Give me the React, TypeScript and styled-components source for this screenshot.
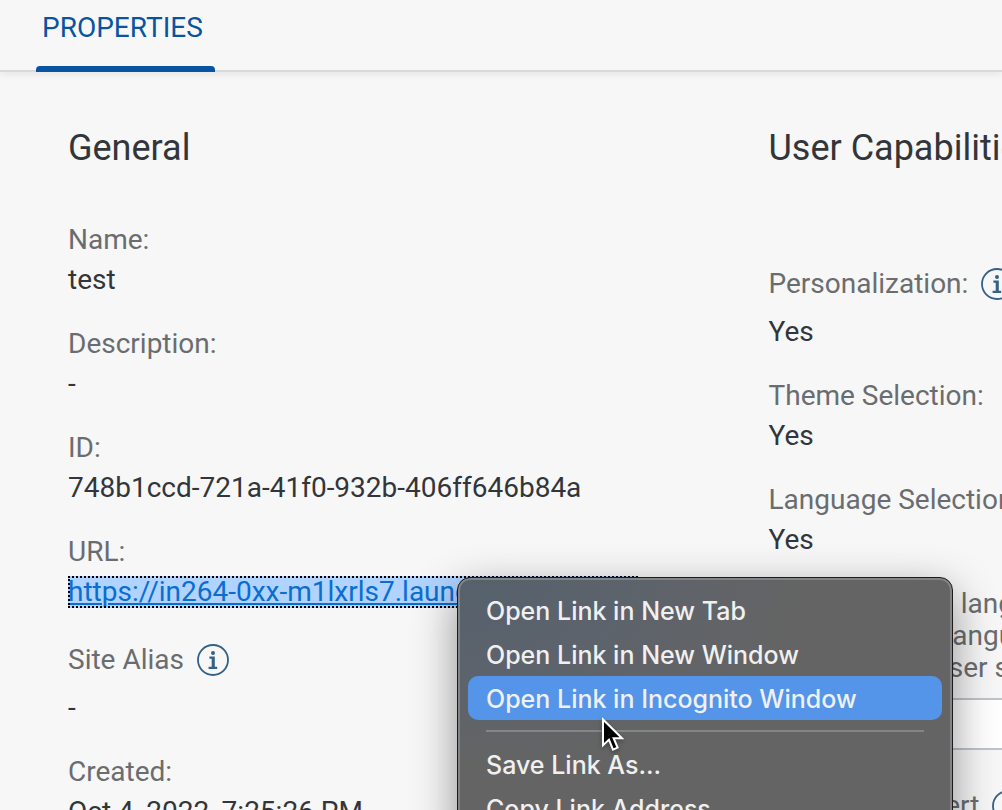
import React from 'react';
import styled, { createGlobalStyle } from 'styled-components';

const GlobalStyle = createGlobalStyle`
  *, *::before, *::after { box-sizing: border-box; }
  body {
    margin: 0;
    background: #f7f7f7;
    color: #32363a;
    font-family: Roboto, "Liberation Sans", sans-serif;
    font-size: 28px;
    font-weight: 430;
    line-height: 32px;
  }
`;

const Page = styled.div`
  position: relative;
  height: 100vh;
  overflow: hidden;
`;

const TabBar = styled.nav`
  height: 72px;
  padding: 0 36px;
  display: flex;
  align-items: stretch;
  border-bottom: 2px solid #d9d9d9;
  box-shadow: 0 2px 8px rgba(0, 0, 0, 0.08);
`;

const Tab = styled.button`
  display: flex;
  flex-direction: column;
  justify-content: space-between;
  margin-bottom: -2px;
  padding: 12px 0 0;
  border: 0;
  background: none;
  color: #0854a0;
  font: inherit;
`;

const TabText = styled.span`
  min-width: 179px;
  padding: 0 6px;
  text-align: left;
`;

const TabMarker = styled.span`
  align-self: stretch;
  height: 6px;
  border-radius: 4px 4px 0 0;
  background: #0854a0;
`;

const Columns = styled.main`
  display: grid;
  grid-template-columns: minmax(0, 3fr) minmax(0, 1fr);
  padding: 58px 0 0 68px;
`;

const Title = styled.h2`
  margin: 0 0 58px;
  font-size: 36px;
  font-weight: 450;
  line-height: 36px;
  white-space: nowrap;
`;

const Fields = styled.dl<{ $offset?: boolean }>`
  display: flex;
  flex-direction: column;
  gap: 32px;
  margin: 0;
  padding-top: ${(p) => (p.$offset ? 40 : 0)}px;
  white-space: nowrap;
`;

const Field = styled.div<{ $tall?: boolean }>`
  display: flex;
  flex-direction: column;
  gap: ${(p) => (p.$tall ? 12 : 8)}px;
`;

const Label = styled.dt<{ $tall?: boolean }>`
  display: flex;
  align-items: center;
  gap: 13px;
  height: ${(p) => (p.$tall ? 40 : 32)}px;
  color: #6a6d70;
`;

const Value = styled.dd`
  margin: 0;
`;

const SiteLink = styled.a`
  display: block;
  width: 570px;
  height: 32px;
  overflow: hidden;
  background: #b0d3ff;
  color: #0a6ed1;
  outline: 2px dotted #000;
  outline-offset: -2px;
  text-decoration: underline;
  text-decoration-thickness: 2px;
  text-underline-offset: 2px;
`;

const Hint = styled.div`
  color: #6a6d70;
`;

const HintLine = styled.div``;

const TextBox = styled.input`
  display: block;
  width: 100%;
  height: 52px;
  margin: 14px 0 4px;
  padding: 0 16px;
  border: 2px solid #bfc4c9;
  border-right: 0;
  background: #fff;
  color: #32363a;
  font: inherit;
`;

const InfoButton = styled.button`
  display: flex;
  flex: none;
  padding: 0;
  border: 0;
  background: none;
  color: #346187;
`;

const Menu = styled.div`
  position: absolute;
  top: 577px;
  left: 457px;
  width: 496px;
  padding: 10px;
  border: 1px solid #1c1c1e;
  border-radius: 13px;
  background: radial-gradient(ellipse 340px 190px at 0 0, #55616c 0%, #5d636c 50%, #646464 100%);
  box-shadow: inset 0 0 0 2px #828486, 0 14px 44px rgba(0, 0, 0, 0.42);
  color: #f0f0f0;
  font-family: Inter, "Liberation Sans", sans-serif;
  font-size: 25px;
  font-weight: 500;
`;

const MenuItem = styled.button<{ $active?: boolean }>`
  display: block;
  width: 100%;
  height: 44px;
  padding: 2px 18px 0;
  border: 0;
  border-radius: 10px;
  background: ${(p) => (p.$active ? '#5495e9' : 'none')};
  color: inherit;
  font: inherit;
  text-align: left;
`;

const Separator = styled.hr`
  height: 2px;
  margin: 10px 18px;
  border: 0;
  background: #858585;
`;

const Pointer = styled.svg`
  position: absolute;
  top: 138px;
  left: 143px;
  filter: drop-shadow(0 2px 2px rgba(0, 0, 0, 0.35));
`;

function Info({ about }: { about: string }) {
  return (
    <InfoButton type="button" aria-label={`About ${about}`}>
      <svg width="32" height="32" viewBox="0 0 32 32" aria-hidden="true">
        <circle cx="16" cy="16" r="15" fill="none" stroke="currentColor" strokeWidth="1.8" />
        <circle cx="16" cy="9" r="2" fill="currentColor" />
        <path d="M12.4 12.6H17.8V22.8H20.2V25H11.6V22.8H14.7V14.8H12.4Z" fill="currentColor" />
      </svg>
    </InfoButton>
  );
}

interface FieldRowProps {
  label: string;
  info?: boolean;
  children?: React.ReactNode;
}

function FieldRow({ label, info, children }: FieldRowProps) {
  return (
    <Field $tall={info}>
      <Label $tall={info}>
        {label}
        {info && <Info about={label} />}
      </Label>
      <Value>{children}</Value>
    </Field>
  );
}

export default function App() {
  return (
    <Page>
      <GlobalStyle />
      <TabBar>
        <Tab type="button">
          <TabText>PROPERTIES</TabText>
          <TabMarker />
        </Tab>
      </TabBar>
      <Columns>
        <section>
          <Title>General</Title>
          <Fields>
            <FieldRow label="Name:">test</FieldRow>
            <FieldRow label="Description:">-</FieldRow>
            <FieldRow label="ID:">748b1ccd-721a-41f0-932b-406ff646b84a</FieldRow>
            <FieldRow label="URL:">
              <SiteLink href="#site">https://in264-0xx-m1lxrls7.launch</SiteLink>
            </FieldRow>
            <FieldRow label="Site Alias" info>-</FieldRow>
            <FieldRow label="Created:">Oct 4, 2022, 7:25:26 PM</FieldRow>
          </Fields>
        </section>
        <section>
          <Title>User Capabilities</Title>
          <Fields $offset>
            <FieldRow label="Personalization:" info>Yes</FieldRow>
            <FieldRow label="Theme Selection:">Yes</FieldRow>
            <FieldRow label="Language Selection:">Yes</FieldRow>
            <Hint>
              <HintLine>Select up to 10 languages</HintLine>
              <HintLine>as the default languages</HintLine>
              <HintLine>shown in the user settings</HintLine>
              <TextBox aria-label="Languages" />
            </Hint>
            <FieldRow label="Notification Alert" info />
          </Fields>
        </section>
      </Columns>
      <Menu role="menu">
        <MenuItem role="menuitem">Open Link in New Tab</MenuItem>
        <MenuItem role="menuitem">Open Link in New Window</MenuItem>
        <MenuItem role="menuitem" $active>Open Link in Incognito Window</MenuItem>
        <Separator />
        <MenuItem role="menuitem">Save Link As...</MenuItem>
        <MenuItem role="menuitem">Copy Link Address</MenuItem>
        <Pointer width="26" height="38" viewBox="0 0 26 38" aria-hidden="true">
          <path
            d="M2 3.5V29.2L8 23.8L12 33.6L16.6 31.6L12.6 22.2H21Z"
            fill="#000"
            stroke="#fff"
            strokeWidth="2"
          />
        </Pointer>
      </Menu>
    </Page>
  );
}
